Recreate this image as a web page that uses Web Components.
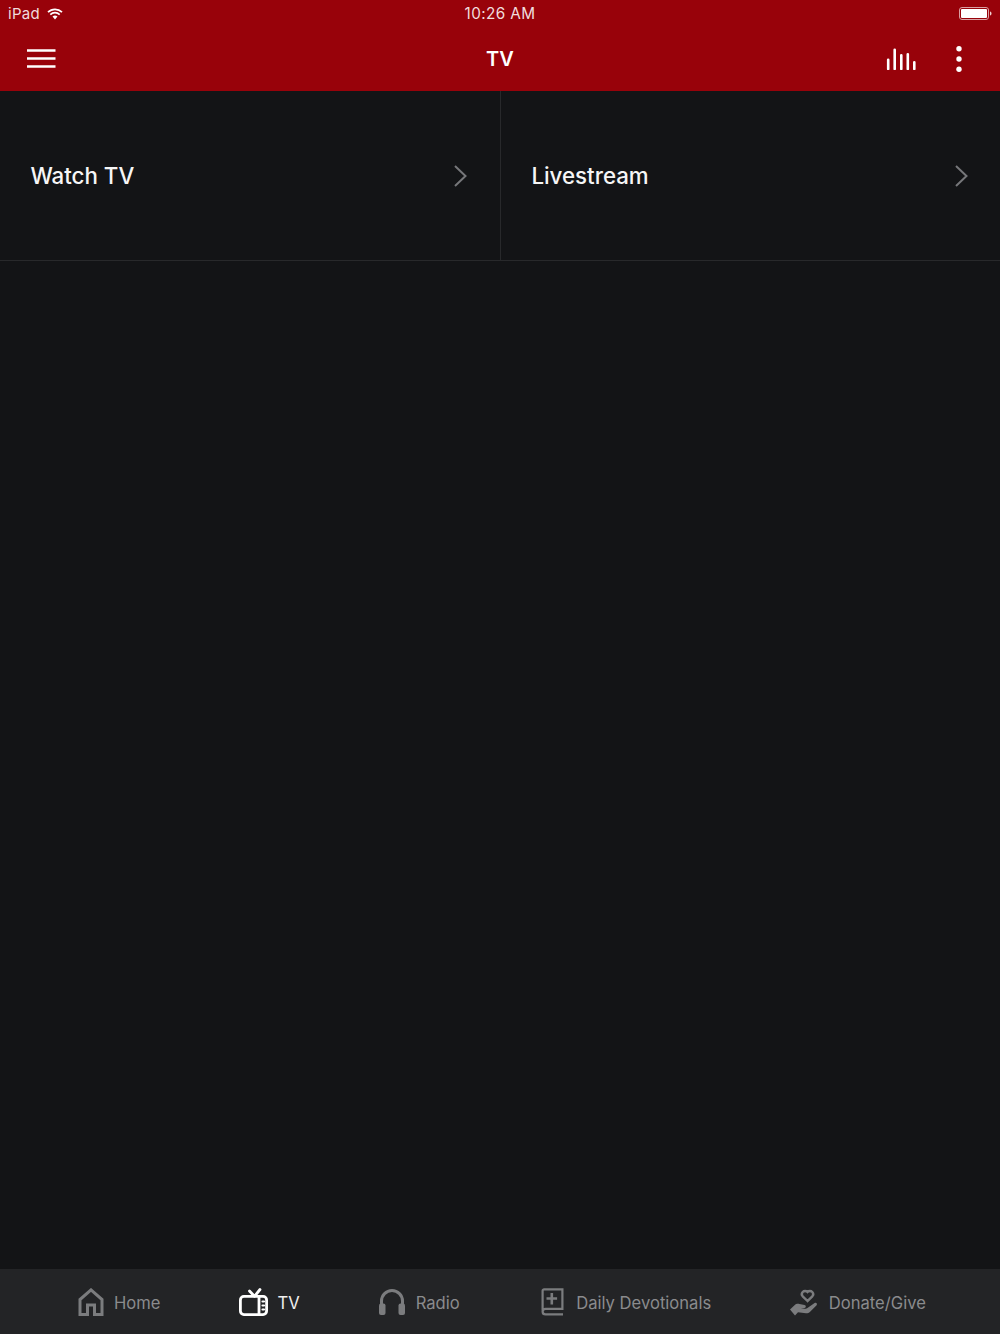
<!DOCTYPE html>
<html><head><meta charset="utf-8"><style>
html,body{margin:0;height:100%;background:#131416}
body{font-family:Inter,"Liberation Sans",sans-serif}
app-shell{height:1334px}
</style></head><body>
<app-shell>
  <status-bar slot="top"></status-bar>
  <nav-bar slot="top" title="TV"></nav-bar>
  <div slot="main" style="display:grid;grid-template-columns:501px 499px">
    <menu-tile divider>Watch TV</menu-tile>
    <menu-tile>Livestream</menu-tile>
  </div>
  <tab-bar slot="bottom">
    <tab-item label="Home" icon="home" g="10" ml="0"></tab-item>
    <tab-item label="TV" icon="tv" g="9.5" ml="78.500" active></tab-item>
    <tab-item label="Radio" icon="radio" g="10.6" ml="79.400"></tab-item>
    <tab-item label="Daily Devotionals" icon="book" g="12" ml="81.500"></tab-item>
    <tab-item label="Donate/Give" icon="give" g="10.300" ml="79.300"></tab-item>
  </tab-bar>
</app-shell>
<script>
const def=(n,c)=>customElements.define(n,c);
class Base extends HTMLElement{
  constructor(){super();this.attachShadow({mode:'open'});}
}
def('app-shell',class extends Base{connectedCallback(){this.shadowRoot.innerHTML=`<style>
:host{display:flex;flex-direction:column;width:100%;background:#131416}
main{flex:1}
</style><slot name="top"></slot><main><slot name="main"></slot></main><slot name="bottom"></slot>`}});
def('status-bar',class extends Base{connectedCallback(){this.shadowRoot.innerHTML=`<style>
:host{display:grid;grid-template-columns:1fr auto 1fr;align-items:center;height:27px;background:#98020a;color:#f0dcdd;font-size:15px;padding:0 8px;box-sizing:border-box;letter-spacing:.3px}
.l{display:flex;align-items:center;gap:7px}
.r{display:flex;justify-content:flex-end}
svg{display:block}
.t{font-size:15.300px;letter-spacing:.4px}
</style>
<div class="l"><span>iPad</span><svg width="16" height="12" viewBox="0 0 16 12"><path d="M1 4.200a10 10 0 0 1 14 0M3.300 6.600a6.800 6.800 0 0 1 9.400 0" fill="none" stroke="#fff" stroke-width="1.700"/><path d="M5.500 8.600a3.600 3.600 0 0 1 5 0L8 11.400z" fill="#fff"/></svg></div>
<span class="t">10:26 AM</span>
<div class="r"><svg width="33" height="13" viewBox="0 0 33 13"><rect x=".5" y=".5" width="29" height="12" rx="2.500" fill="none" stroke="#d9a0a3"/><rect x="2" y="2" width="26" height="9" rx="1" fill="#fff"/><path d="M31 4.500c1 .2 1.500 1 1.500 2s-.5 1.800-1.500 2z" fill="#f0d0d0"/></svg></div>`}});
def('nav-bar',class extends Base{connectedCallback(){this.shadowRoot.innerHTML=`<style>
:host{display:grid;grid-template-columns:1fr auto 1fr;align-items:center;height:64px;background:#98020a;color:#fff;padding:0 27px;box-sizing:border-box}
h1{margin:0;font-size:20px;font-weight:600;text-align:center}
.a{display:flex;align-items:center;justify-content:flex-end;gap:39.500px;margin-right:11.500px}
svg{display:block}
</style>
<svg width="29" height="20" viewBox="0 0 29 20"><path d="M0 1.500h28.500M0 9.500h28.500M0 17.500h28.500" stroke="#fff" stroke-width="2.600"/></svg>
<h1>${this.getAttribute('title')}</h1>
<div class="a"><svg width="30" height="22" viewBox="0 0 30 22" stroke="#fff" stroke-width="2.600" stroke-linecap="round"><path d="M2.200 11.800V21M8.700 1.800V21M15.300 7.300V21M21.800 6.300V21M28.300 14.300V21"/></svg>
<svg width="6" height="28" viewBox="0 0 6 28" fill="#fff"><circle cx="3" cy="3.700" r="2.700"/><circle cx="3" cy="14" r="2.700"/><circle cx="3" cy="24.300" r="2.700"/></svg></div>`}});
def('menu-tile',class extends Base{connectedCallback(){const d=this.hasAttribute('divider');this.shadowRoot.innerHTML=`<style>
:host{display:flex;align-items:center;justify-content:space-between;height:170px;box-sizing:border-box;border-bottom:1px solid #28292b;padding:0 ${d?33:32}px 0 30.400px;color:#f6f6f6;font-size:22.300px;font-weight:500;${d?'border-right:1px solid #28292b;':''}}
svg{display:block}
</style><slot></slot><svg width="13" height="22" viewBox="0 0 13 22"><path d="M1 1l10.500 10L1 21" fill="none" stroke="#76777a" stroke-width="2"/></svg>`}});
def('tab-bar',class extends Base{connectedCallback(){this.shadowRoot.innerHTML=`<style>
:host{display:flex;justify-content:flex-start;align-items:center;padding-left:78px;height:65px;background:#232426}
</style><slot></slot>`}});
const ICONS={
home:`<svg width="26" height="28" viewBox="0 0 26 28" fill="none" stroke="currentColor" stroke-width="3"><path d="M2 26.500V11.500L13 1.900l11 9.600v15h-7.500v-9.500h-7v9.500z"/></svg>`,
tv:`<svg width="29" height="28" viewBox="0 0 29 28" fill="none" stroke="currentColor" stroke-width="2.800" stroke-linecap="round" stroke-linejoin="round"><rect x="1.400" y="8.400" width="26.200" height="18.200" rx="3.500"/><path d="M10.500 3l5 5.300 5.500-6.800M20 8.500v18"/><path d="M23.500 13.500h1.500M23.500 17.500h1.500M23.500 21.500h1.500" stroke-width="2.200"/></svg>`,
radio:`<svg width="26" height="28" viewBox="0 0 26 28" fill="none"><path d="M2.500 19V13a10.500 10.500 0 0 1 21 0v6" stroke="currentColor" stroke-width="3"/><rect x="0" y="15.500" width="6.500" height="11.500" rx="2" fill="currentColor"/><rect x="19.500" y="15.500" width="6.500" height="11.500" rx="2" fill="currentColor"/></svg>`,
book:`<svg width="23" height="28" viewBox="0 0 23 28" fill="none" stroke="currentColor" stroke-width="2.200"><path d="M1.600 22.500V2.800a1.500 1.500 0 0 1 1.500-1.500h18.300v19.500H4.500a2.900 2.900 0 0 0-2.900 2.800 2.900 2.900 0 0 0 2.900 2.800H22"/><path d="M10.800 5v11.500M5.500 10.500h10.600" stroke-width="2.600"/></svg>`,
give:`<svg width="28" height="28" viewBox="0 0 28 28"><path d="M17.500 12.500l-4.800-4.700a3.200 3.200 0 0 1 0-4.300 3.300 3.300 0 0 1 4.800 0 3.300 3.300 0 0 1 4.800 0 3.200 3.200 0 0 1 0 4.300z" transform="translate(0 .5)" fill="none" stroke="currentColor" stroke-width="2.400"/><path d="M0 21.500l4.500-4.200c1.500-1.400 3-1.700 5-1.300l5 .9c1.800.3 1.800 2.800 0 3l-3.700.3 4 .6c1.200 0 2-.3 3-1l6.800-4.700c1.400-1 3.200.8 2 2.100l-6.500 6.500c-1.200 1.200-2.500 1.700-4.200 1.600L8 24.300 5 27.500z" fill="currentColor"/></svg>`};
def('tab-item',class extends Base{connectedCallback(){
const a=this.hasAttribute('active');
this.shadowRoot.innerHTML=`<style>
:host{display:flex;align-items:center;margin-left:${this.getAttribute('ml')}px;gap:${this.getAttribute('g')}px;color:${a?'#fff':'#7b7c7e'};font-size:16.600px;white-space:nowrap}
svg{display:block;flex:none}
span{color:${a?'#f0f0f0':'#8a8b8d'};padding-top:3px}
</style>${ICONS[this.getAttribute('icon')]}<span>${this.getAttribute('label')}</span>`}});
</script>
</body></html>
